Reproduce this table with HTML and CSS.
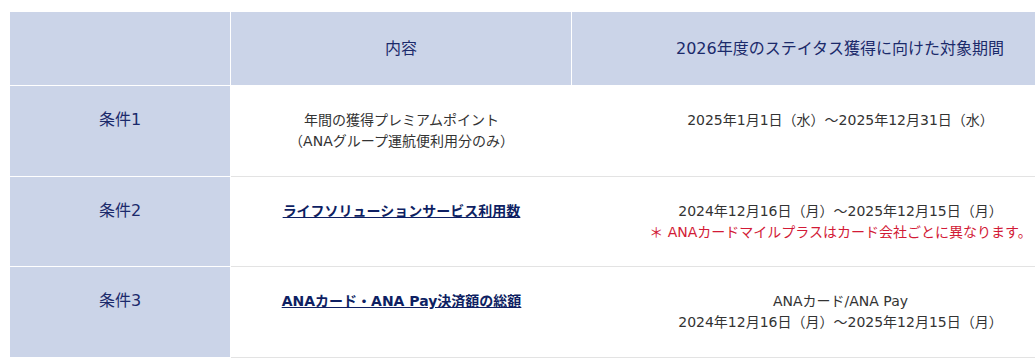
FILE: index.html
```html
<!DOCTYPE html>
<html lang="ja">
<head>
<meta charset="utf-8">
<link rel="stylesheet" href="styles.css">
</head>
<body>
<div class="wrap">
<table class="status">
  <colgroup>
    <col class="c1">
    <col class="c2">
    <col class="c3">
  </colgroup>
  <thead>
    <tr>
      <th class="label"></th>
      <th>内容</th>
      <th>2026年度のステイタス獲得に向けた対象期間</th>
    </tr>
  </thead>
  <tbody>
    <tr>
      <td class="label">条件1</td>
      <td>年間の獲得プレミアムポイント<br>（ANAグループ運航便利用分のみ）</td>
      <td>2025年1月1日（水）～2025年12月31日（水）</td>
    </tr>
    <tr>
      <td class="label">条件2</td>
      <td><a class="link" href="#">ライフソリューションサービス利用数</a></td>
      <td>2024年12月16日（月）～2025年12月15日（月）<br><span class="note">＊ ANAカードマイルプラスはカード会社ごとに異なります。</span></td>
    </tr>
    <tr>
      <td class="label">条件3</td>
      <td><a class="link" href="#">ANAカード・ANA Pay決済額の総額</a></td>
      <td>ANAカード/ANA Pay<br>2024年12月16日（月）～2025年12月15日（月）</td>
    </tr>
  </tbody>
</table>
</div>
</body>
</html>
```

FILE: styles.css
```css
html, body {
  margin: 0;
  padding: 0;
  background: #fff;
  overflow: hidden;
}

.wrap {
  padding: 12px 0 0 10px;
  width: 1200px;
}

.status {
  border-collapse: separate;
  border-spacing: 0;
  table-layout: fixed;
  width: 1099px;
  font-family: "DejaVu Sans", "Noto Sans CJK JP", sans-serif;
  font-size: 14px;
  line-height: 21px;
  color: #333;
}

.c1 { width: 221px; }
.c2 { width: 341px; }
.c3 { width: 537px; }

.status th {
  background: #cbd4e8;
  color: #1b2a6b;
  font-weight: normal;
  font-size: 16px;
  height: 73px;
  padding: 0;
  text-align: center;
  vertical-align: middle;
  border-right: 1px solid #fff;
  border-bottom: 1px solid #fff;
}

.status td {
  padding: 23px 8px 23.5px;
  text-align: center;
  vertical-align: baseline;
  border-bottom: 1px solid #e3e3e3;
}

.status td.label {
  background: #cbd4e8;
  color: #1b2a6b;
  font-size: 16px;
  border-right: 1px solid #fff;
  border-bottom: 1px solid #fff;
}

.link {
  color: #0e1f63;
  font-weight: bold;
  text-decoration: underline;
}

.note {
  color: #d21a36;
}
```
